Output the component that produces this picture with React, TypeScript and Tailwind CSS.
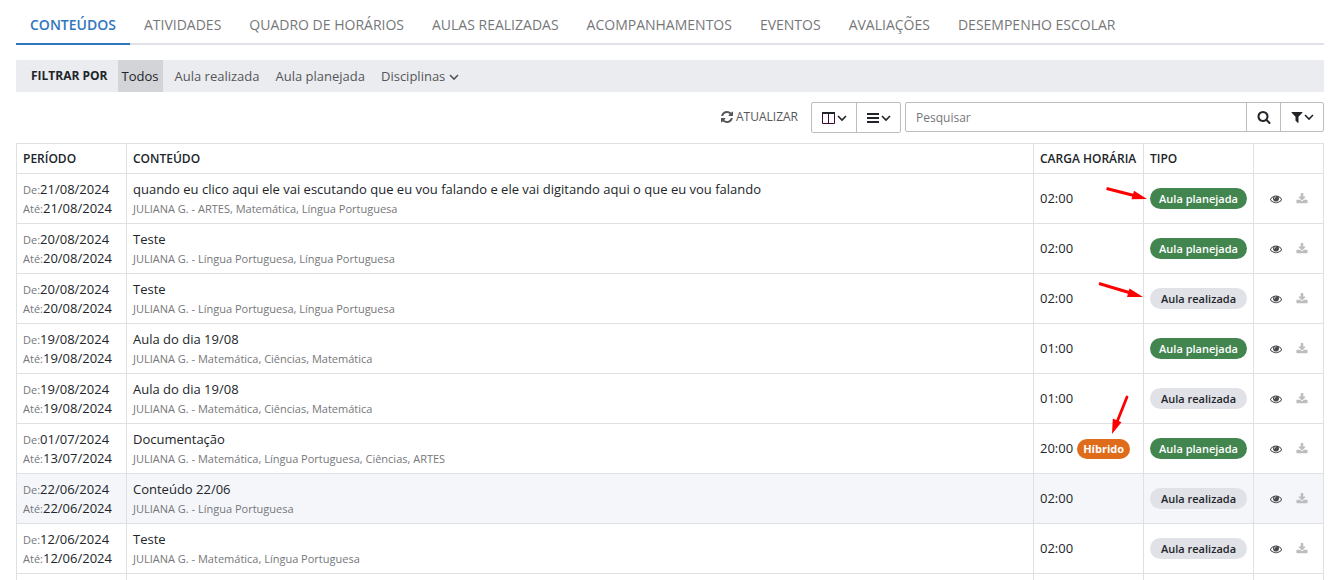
import React from 'react';

const PATHS = {
  refresh:
    'M1639 1056q0 5-1 7-64 268-268 434.5t-478 166.5q-146 0-282.5-55t-243.5-157l-129 129q-19 19-45 19t-45-19-19-45v-448q0-26 19-45t45-19h448q26 0 45 19t19 45-19 45l-137 137q71 66 161 102t187 36q134 0 250-65t186-179q11-17 53-117 8-23 30-23h192q13 0 22.5 9.5t9.5 22.5zm25-800v448q0 26-19 45t-45 19h-448q-26 0-45-19t-19-45 19-45l138-138q-148-137-349-137-134 0-250 65t-186 179q-11 17-53 117-8 23-30 23h-199q-13 0-22.5-9.5t-9.5-22.5v-7q65-268 270-434.5t480-166.5q146 0 284 55.5t245 156.5l130-129q19-19 45-19t45 19 19 45z',
  eye: 'M1664 960q-152-236-381-353 61 104 61 225 0 185-131.5 316.5t-316.5 131.5-316.5-131.5-131.5-316.5q0-121 61-225-229 117-381 353 133 205 333.5 326.5t434.5 121.5 434.5-121.5 333.5-326.5zm-720-384q0-20-14-34t-34-14q-125 0-214.5 89.5t-89.5 214.5q0 20 14 34t34 14 34-14 14-34q0-86 61-147t147-61q20 0 34-14t14-34zm848 384q0 34-20 69-140 230-376.5 368.5t-499.5 138.5-499.5-139-376.5-368q-20-35-20-69t20-69q140-229 376.5-368t499.5-139 499.5 139 376.5 368q20 35 20 69z',
  download:
    'M1728 1120v320q0 40-28 68t-68 28h-1472q-40 0-68-28t-28-68v-320q0-40 28-68t68-28h465l135 136q58 56 136 56t136-56l136-136h464q40 0 68 28t28 68zm-325-569q17 41-14 70l-448 448q-18 19-45 19t-45-19l-448-448q-31-29-14-70 17-39 59-39h256v-448q0-26 19-45t45-19h256q26 0 45 19t19 45v448h256q42 0 59 39z',
  search:
    'M1216 832q0-185-131.5-316.5t-316.5-131.5-316.5 131.5-131.5 316.5 131.5 316.5 316.5 131.5 316.5-131.5 131.5-316.5zm512 832q0 52-38 90t-90 38q-54 0-90-38l-343-342q-179 124-399 124-143 0-273.5-55.5t-225-150-150-225-55.5-273.5 55.5-273.5 150-225 225-150 273.5-55.5 273.5 55.5 225 150 150 225 55.5 273.5q0 220-124 399l343 343q37 37 37 90z',
  filter:
    'M1595 295q17 41-14 70l-493 493v742q0 42-39 59-13 5-25 5-27 0-45-19l-256-256q-19-19-19-45v-486l-493-493q-31-29-14-70 17-39 59-39h1280q42 0 59 39z',
};

function Icon({ name, className }: { name: keyof typeof PATHS; className: string }) {
  return (
    <svg viewBox="0 0 1792 1792" fill="currentColor" aria-hidden="true" className={className}>
      <path d={PATHS[name]} />
    </svg>
  );
}

function Chevron() {
  return (
    <svg viewBox="0 0 10 8" className="h-2 w-2.5" fill="none" stroke="currentColor" strokeWidth="1.6" aria-hidden="true">
      <path d="M1 2l4 4 4-4" />
    </svg>
  );
}

function ColumnsIcon() {
  return (
    <svg viewBox="0 0 14 12" className="h-3 w-3.5" aria-hidden="true">
      <path d="M0.5 1v10.500h12v-10.500M6.500 1v10.500" fill="none" stroke="#3b0a33" />
      <path d="M0 0h13v2H0z" fill="#212529" />
    </svg>
  );
}

function BarsIcon() {
  return (
    <svg viewBox="0 0 12 10" className="h-2.5 w-3" fill="currentColor" aria-hidden="true">
      <path d="M0 0h12v2H0zM0 4h12v2H0zM0 8h12v2H0z" />
    </svg>
  );
}

const TABS = [
  'CONTEÚDOS',
  'ATIVIDADES',
  'QUADRO DE HORÁRIOS',
  'AULAS REALIZADAS',
  'ACOMPANHAMENTOS',
  'EVENTOS',
  'AVALIAÇÕES',
  'DESEMPENHO ESCOLAR',
];

type Arrow = 'planned' | 'done' | 'hybrid';

interface Row {
  from: string;
  to: string;
  title: string;
  detail: string;
  hours: string;
  planned: boolean;
  hybrid?: boolean;
  arrow?: Arrow;
}

const ROWS: Row[] = [
  {
    from: '21/08/2024',
    to: '21/08/2024',
    title: 'quando eu clico aqui ele vai escutando que eu vou falando e ele vai digitando aqui o que eu vou falando',
    detail: 'JULIANA G. - ARTES, Matemática, Língua Portuguesa',
    hours: '02:00',
    planned: true,
    arrow: 'planned',
  },
  { from: '20/08/2024', to: '20/08/2024', title: 'Teste', detail: 'JULIANA G. - Língua Portuguesa, Língua Portuguesa', hours: '02:00', planned: true },
  { from: '20/08/2024', to: '20/08/2024', title: 'Teste', detail: 'JULIANA G. - Língua Portuguesa, Língua Portuguesa', hours: '02:00', planned: false, arrow: 'done' },
  { from: '19/08/2024', to: '19/08/2024', title: 'Aula do dia 19/08', detail: 'JULIANA G. - Matemática, Ciências, Matemática', hours: '01:00', planned: true },
  { from: '19/08/2024', to: '19/08/2024', title: 'Aula do dia 19/08', detail: 'JULIANA G. - Matemática, Ciências, Matemática', hours: '01:00', planned: false },
  {
    from: '01/07/2024',
    to: '13/07/2024',
    title: 'Documentação',
    detail: 'JULIANA G. - Matemática, Língua Portuguesa, Ciências, ARTES',
    hours: '20:00',
    planned: true,
    hybrid: true,
    arrow: 'hybrid',
  },
  { from: '22/06/2024', to: '22/06/2024', title: 'Conteúdo 22/06', detail: 'JULIANA G. - Língua Portuguesa', hours: '02:00', planned: false },
  { from: '12/06/2024', to: '12/06/2024', title: 'Teste', detail: 'JULIANA G. - Matemática, Língua Portuguesa', hours: '02:00', planned: false },
];

/* Red callout arrows laid over the workload cell. */
function Callout({ kind }: { kind: Arrow }) {
  if (kind === 'hybrid') {
    return (
      <svg viewBox="0 0 18 40" className="absolute -top-7 right-3.5 h-10 w-[18px]" aria-hidden="true">
        <path d="M16 2L6 27" stroke="#f00" strokeWidth="2.8" strokeLinecap="round" />
        <path d="M1 39L1.800 23.500L10.500 27.300z" fill="#f00" />
      </svg>
    );
  }
  if (kind === 'planned') {
    return (
      <svg viewBox="0 0 42 16" className="absolute top-3.5 -right-1 z-10 h-4 w-[42px]" aria-hidden="true">
        <path d="M1.500 2.500L29 9.500" stroke="#f00" strokeWidth="3" />
        <path d="M42 13L26.500 13.200L29 4.800z" fill="#f00" />
      </svg>
    );
  }
  return (
    <svg viewBox="0 0 46 18" className="absolute top-2.5 right-0 z-10 h-[18px] w-[46px]" aria-hidden="true">
      <path d="M2 1.500L32 10.500" stroke="#f00" strokeWidth="3" />
      <path d="M46 15L30 15L32.500 6.500z" fill="#f00" />
    </svg>
  );
}

const CELL = 'border border-[#dfe0e4] px-1.5';

function TableRow({ row, shaded }: { row: Row; shaded: boolean }) {
  return (
    <tr className={shaded ? 'h-[50px] bg-[#f5f6fa]' : 'h-[50px]'}>
      <td className={CELL}>
        <div className="leading-[19px]">
          <small className="text-[11px] text-[#76777a]">De:</small>
          {row.from}
        </div>
        <div className="leading-[18px]">
          <small className="text-[11px] text-[#76777a]">Até:</small>
          {row.to}
        </div>
      </td>
      <td className={CELL}>
        <div className="leading-[19px]">{row.title}</div>
        <div className="text-[11px] leading-[19px] text-[#76777a]">{row.detail}</div>
      </td>
      <td className={CELL}>
        <div className="flex items-center gap-1">
          <span>{row.hours}</span>
          {row.hybrid && (
            <span className="rounded-full bg-[#df6c1b] px-1.5 text-[11px] leading-5 font-bold text-white">Híbrido</span>
          )}
        </div>
        {row.arrow && (
          <div className="relative -mx-1.5">
            <div className="absolute right-0 bottom-0 h-9 w-full">
              <Callout kind={row.arrow} />
            </div>
          </div>
        )}
      </td>
      <td className={CELL}>
        <span
          className={
            row.planned
              ? 'block rounded-full bg-[#43854f] text-center text-[11px] leading-[21px] font-semibold text-white'
              : 'block rounded-full bg-[#e1e2e7] text-center text-[11px] leading-[21px] font-semibold text-[#212529]'
          }
        >
          {row.planned ? 'Aula planejada' : 'Aula realizada'}
        </span>
      </td>
      <td className={CELL}>
        <div className="flex items-center justify-center gap-3.5">
          <button type="button" aria-label="Visualizar" className="text-[#4a4b4e]">
            <Icon name="eye" className="size-3" />
          </button>
          <button type="button" aria-label="Baixar" className="text-[#bcbdbf]">
            <Icon name="download" className="size-3" />
          </button>
        </div>
      </td>
    </tr>
  );
}

export default function App() {
  return (
    <main className="h-screen overflow-hidden bg-white pr-[5px] pl-4 font-['Open_Sans',sans-serif] text-[13px] text-[#212529]">
      <nav className="flex border-b-2 border-[#e1e2e7] pt-2 text-sm text-[#76777a]">
        {TABS.map((tab, i) => (
          <a
            key={tab}
            href="#"
            className={
              i === 0
                ? '-mb-0.5 border-b-2 border-[#3076be] px-3.5 pt-[7px] pb-2 font-semibold whitespace-nowrap text-[#3076be]'
                : 'px-3.5 pt-[7px] pb-2 whitespace-nowrap'
            }
          >
            {tab}
          </a>
        ))}
      </nav>

      <div className="mt-[15px] flex h-8 items-center bg-[#ebecf0] pl-[15px] text-[#55565a]">
        <span className="mr-2.5 text-xs font-bold text-[#212529]">FILTRAR POR</span>
        <button type="button" className="h-8 bg-[#d3d4d8] px-1 pt-0.5 text-[#212529]">
          Todos
        </button>
        <button type="button" className="ml-2 px-1 pt-0.5">
          Aula realizada
        </button>
        <button type="button" className="ml-2 px-1 pt-0.5">
          Aula planejada
        </button>
        <button type="button" className="ml-2 flex items-center gap-1 px-1 pt-0.5">
          Disciplinas
          <Chevron />
        </button>
      </div>

      <div className="mt-2.5 flex items-start justify-end">
        <button type="button" className="mr-[13px] flex h-[30px] items-center gap-0.5 text-xs text-[#55565a]">
          <Icon name="refresh" className="size-3.5" />
          ATUALIZAR
        </button>
        <div className="flex h-[31px] rounded-xs border border-[#bcbdc1]">
          <button type="button" aria-label="Colunas" className="flex w-[45px] items-center justify-center gap-px border-r border-[#bcbdc1]">
            <ColumnsIcon />
            <Chevron />
          </button>
          <button type="button" aria-label="Linhas" className="flex w-[43px] items-center justify-center gap-0.5">
            <BarsIcon />
            <Chevron />
          </button>
        </div>
        <div className="ml-1 flex h-[30px] w-[419px] rounded-xs border border-[#bcbdc1]">
          <input
            type="text"
            aria-label="Pesquisar"
            placeholder="Pesquisar"
            className="min-w-0 flex-1 px-2.5 pt-0.5 text-xs outline-none placeholder:text-[#76777a]"
          />
          <button type="button" aria-label="Buscar" className="flex w-[34px] items-center justify-center border-l border-[#bcbdc1]">
            <Icon name="search" className="size-3.5" />
          </button>
          <button type="button" aria-label="Filtros" className="flex w-[43px] items-center justify-center border-l border-[#bcbdc1]">
            <Icon name="filter" className="size-3.5" />
            <Chevron />
          </button>
        </div>
      </div>

      <table className="mt-2.5 w-full table-fixed border-collapse">
        <colgroup>
          <col className="w-[110px]" />
          <col />
          <col className="w-[110px]" />
          <col className="w-[110px]" />
          <col className="w-[70px]" />
        </colgroup>
        <thead>
          <tr className="h-[30px] text-left text-xs whitespace-nowrap">
            <th className={`${CELL} font-semibold`}>PERÍODO</th>
            <th className={`${CELL} font-semibold`}>CONTEÚDO</th>
            <th className={`${CELL} font-semibold`}>CARGA HORÁRIA</th>
            <th className={`${CELL} font-semibold`}>TIPO</th>
            <td className={CELL} />
          </tr>
        </thead>
        <tbody>
          {ROWS.map((row, i) => (
            <TableRow key={i} row={row} shaded={i === 6} />
          ))}
          <tr className="h-[50px]">
            <td className={CELL} />
            <td className={CELL} />
            <td className={CELL} />
            <td className={CELL} />
            <td className={CELL} />
          </tr>
        </tbody>
      </table>
    </main>
  );
}
